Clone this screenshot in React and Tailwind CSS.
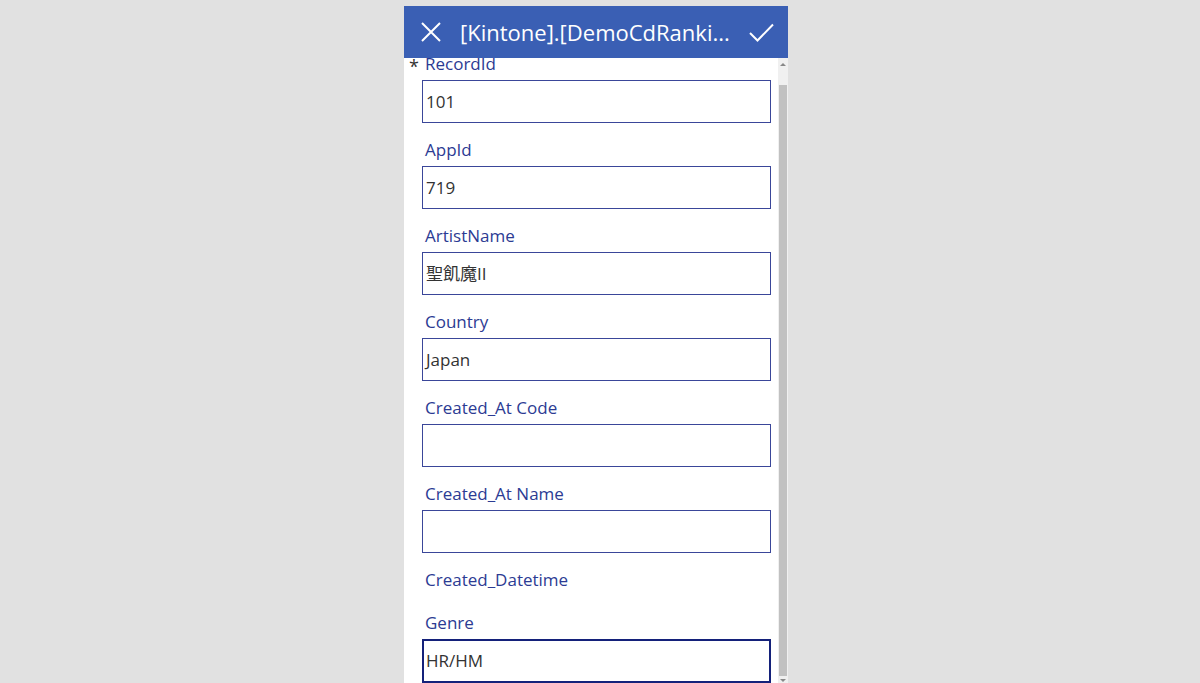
import React from 'react';

const fields = [
  { label: 'AppId', value: '719' },
  { label: 'ArtistName', value: '聖飢魔II' },
  { label: 'Country', value: 'Japan' },
  { label: 'Created_At Code', value: '' },
  { label: 'Created_At Name', value: '' },
  { label: 'Created_Datetime', value: null },
];

const font = { fontFamily: '"Open Sans", "Noto Sans CJK JP", sans-serif' };

const Field = ({ label, value, focused }) => (
  <div>
    <div className="h-[43px] pt-[17px] pl-[21px] text-[17px] leading-[20px] text-[#2c3b93]">{label}</div>
    {value !== null && (
      <div
        className={
          focused
            ? 'ml-[18px] mr-[7px] h-[44px] border-2 border-[#14217a] bg-white flex items-center pl-[2px] text-[17px] text-[#333]'
            : 'ml-[18px] mr-[7px] h-[43px] border border-[#3a4699] bg-white flex items-center pl-[3px] text-[17px] text-[#333]'
        }
      >
        {value}
      </div>
    )}
  </div>
);

const App = () => (
  <div className="w-[1200px] h-[683px] bg-[#e1e1e1] overflow-hidden flex justify-center pt-[6px]" style={font}>
    <div className="w-[384px] h-[677px] mr-[8px] bg-white flex flex-col">
      <div className="h-[52px] bg-[#3a5fb4] flex items-center px-[17px] text-white shrink-0">
        <svg width="20" height="20" viewBox="0 0 20 20" className="shrink-0">
          <path d="M1 1 L19 19 M19 1 L1 19" stroke="white" strokeWidth="2" fill="none" />
        </svg>
        <div className="flex-1 ml-[19px] text-[22px] leading-[30px] whitespace-nowrap overflow-hidden">[Kintone].[DemoCdRanki...</div>
        <svg width="25" height="19" viewBox="0 0 25 19" className="shrink-0 mr-[-3px]">
          <path d="M1 10 L8.5 17.5 L24 1.5" stroke="white" strokeWidth="2" fill="none" />
        </svg>
      </div>
      <div className="flex flex-1 overflow-hidden">
        <div className="flex-1 overflow-hidden">
          <div className="-mt-[21px]">
            <div className="relative">
              <span className="absolute left-[5px] top-[16px] text-[18px] text-[#333]">*</span>
              <Field label="RecordId" value="101" />
            </div>
            {fields.map((f) => (
              <Field key={f.label} label={f.label} value={f.value} />
            ))}
            <Field label="Genre" value="HR/HM" focused />
          </div>
        </div>
        <div className="w-[10px] bg-[#f0f0f0] flex flex-col">
          <div className="h-[27px] flex items-start justify-center pt-[5px]">
            <div className="w-0 h-0 border-l-[3px] border-r-[3px] border-b-[3px] border-l-transparent border-r-transparent border-b-[#888]" />
          </div>
          <div className="flex-1 bg-[#c1c1c1] mx-[1px]" />
          <div className="h-[7px] flex items-end justify-center pb-[1px]">
            <div className="w-0 h-0 border-l-[3px] border-r-[3px] border-t-[3px] border-l-transparent border-r-transparent border-t-[#888]" />
          </div>
        </div>
      </div>
    </div>
  </div>
);

export default App;
